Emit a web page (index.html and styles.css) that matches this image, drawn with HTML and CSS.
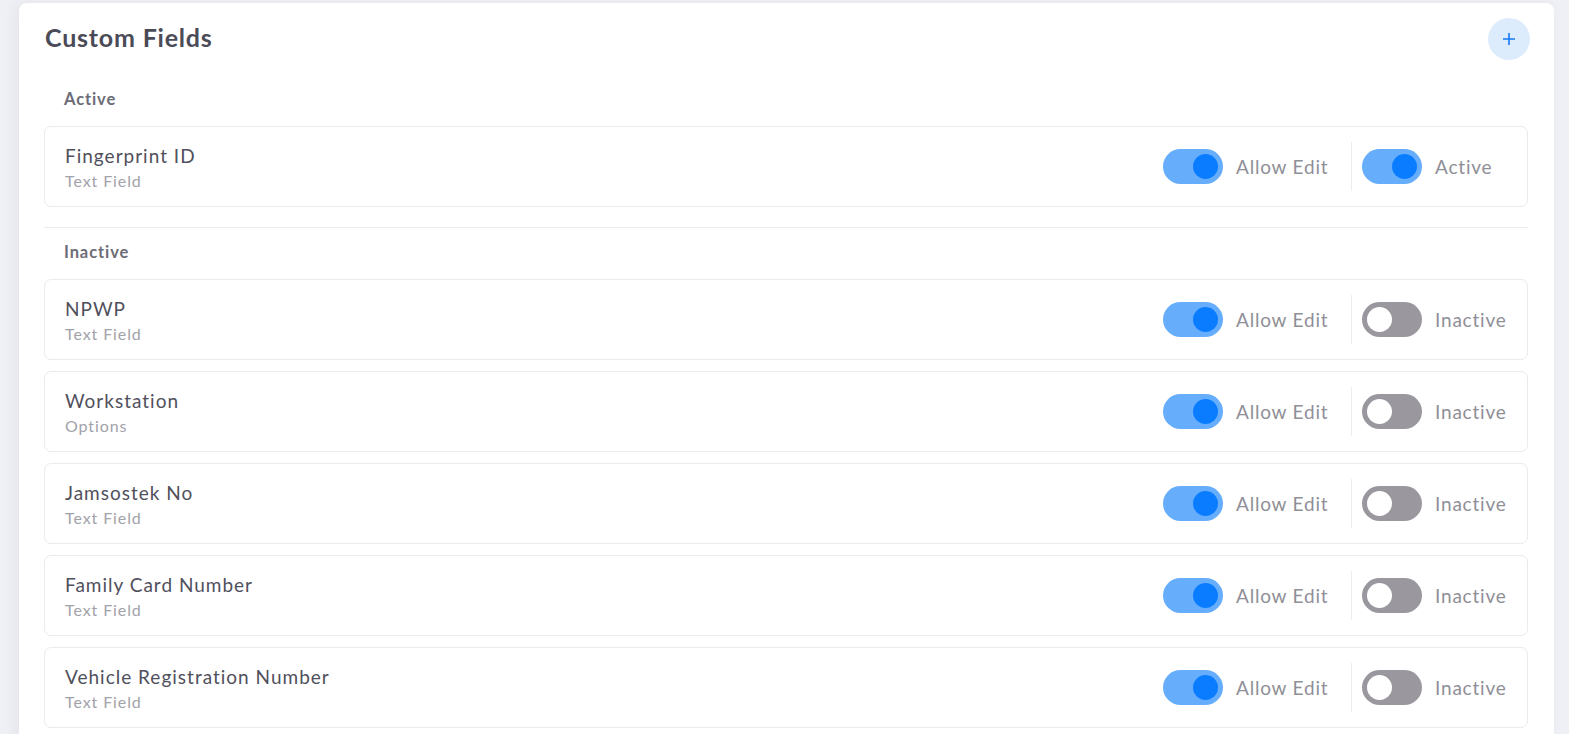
FILE: index.html
```html
<!DOCTYPE html>
<html lang="en">
<head>
    <meta charset="UTF-8">
    <meta name="viewport" content="width=device-width, initial-scale=1.0">
    <title>Custom Fields</title>
    <link rel="stylesheet" href="styles.css">
</head>
<body>
    <div class="card">
      <div class="card-head">
        <h1>Custom Fields</h1>
        <button class="add-btn" aria-label="Add field">
          <svg width="14" height="14" viewBox="0 0 14 14"><path d="M7 1v12M1 7h12" stroke="#1479f5" stroke-width="1.6" fill="none"/></svg>
        </button>
      </div>

      <div class="section-label">Active</div>
      <div class="field-list">
        <div class="field">
          <div class="field-info">
            <div class="field-name">Fingerprint ID</div>
            <div class="field-type">Text Field</div>
          </div>
          <div class="field-controls">
            <label class="switch-group edit-group"><span class="switch on"></span><span class="switch-text">Allow Edit</span></label>
            <span class="vline"></span>
            <label class="switch-group"><span class="switch on"></span><span class="switch-text">Active</span></label>
          </div>
        </div>
      </div>

      <hr class="divider">

      <div class="section-label">Inactive</div>
      <div class="field-list">
        <div class="field">
          <div class="field-info">
            <div class="field-name">NPWP</div>
            <div class="field-type">Text Field</div>
          </div>
          <div class="field-controls">
            <label class="switch-group edit-group"><span class="switch on"></span><span class="switch-text">Allow Edit</span></label>
            <span class="vline"></span>
            <label class="switch-group"><span class="switch"></span><span class="switch-text">Inactive</span></label>
          </div>
        </div>
        <div class="field">
          <div class="field-info">
            <div class="field-name">Workstation</div>
            <div class="field-type">Options</div>
          </div>
          <div class="field-controls">
            <label class="switch-group edit-group"><span class="switch on"></span><span class="switch-text">Allow Edit</span></label>
            <span class="vline"></span>
            <label class="switch-group"><span class="switch"></span><span class="switch-text">Inactive</span></label>
          </div>
        </div>
        <div class="field">
          <div class="field-info">
            <div class="field-name">Jamsostek No</div>
            <div class="field-type">Text Field</div>
          </div>
          <div class="field-controls">
            <label class="switch-group edit-group"><span class="switch on"></span><span class="switch-text">Allow Edit</span></label>
            <span class="vline"></span>
            <label class="switch-group"><span class="switch"></span><span class="switch-text">Inactive</span></label>
          </div>
        </div>
        <div class="field">
          <div class="field-info">
            <div class="field-name">Family Card Number</div>
            <div class="field-type">Text Field</div>
          </div>
          <div class="field-controls">
            <label class="switch-group edit-group"><span class="switch on"></span><span class="switch-text">Allow Edit</span></label>
            <span class="vline"></span>
            <label class="switch-group"><span class="switch"></span><span class="switch-text">Inactive</span></label>
          </div>
        </div>
        <div class="field">
          <div class="field-info">
            <div class="field-name">Vehicle Registration Number</div>
            <div class="field-type">Text Field</div>
          </div>
          <div class="field-controls">
            <label class="switch-group edit-group"><span class="switch on"></span><span class="switch-text">Allow Edit</span></label>
            <span class="vline"></span>
            <label class="switch-group"><span class="switch"></span><span class="switch-text">Inactive</span></label>
          </div>
        </div>
      </div>
    </div>
</body>
</html>
```

FILE: styles.css
```css
* {
  padding: 0;
  margin: 0;
  box-sizing: border-box;
}

body {
  background: #eef0f5;
  font-family: "Lato", "Noto Sans", sans-serif;
  padding: 3px 15px 0 19px;
  overflow: hidden;
}

/* main card */
.card {
  background: #fff;
  border-radius: 8px;
  padding: 15px 26px 20px 25px;
  box-shadow: -4px 0 14px rgba(40, 40, 70, 0.05);
}

.card-head {
  display: flex;
  align-items: center;
  justify-content: space-between;
  height: 42px;
}

.card-head h1 {
  font-size: 25px;
  font-weight: 700;
  color: #4b4b57;
  letter-spacing: 0.8px;
  margin-top: -4px;
  padding-left: 1px;
}

.add-btn {
  width: 42px;
  height: 42px;
  border-radius: 50%;
  border: none;
  background: #ddecfd;
  display: flex;
  align-items: center;
  justify-content: center;
  margin-right: -2px;
  cursor: pointer;
}

/* section labels */
.section-label {
  font-size: 16.5px;
  font-weight: 700;
  color: #6c6c76;
  line-height: 20px;
  letter-spacing: 0.9px;
  padding-left: 20px;
  margin: 29px 0 17px;
}

.divider {
  border: none;
  border-top: 1px solid #ebebee;
  margin: 20px 0 0;
}

.divider + .section-label {
  margin-top: 14px;
}

/* field rows */
.field-list {
  display: flex;
  flex-direction: column;
  gap: 11px;
}

.field {
  height: 81px;
  border: 1px solid #ebebee;
  border-radius: 7px;
  padding: 17px 20px;
  display: flex;
  align-items: center;
  justify-content: space-between;
}

.field-info {
  align-self: flex-start;
}

.field-name {
  font-size: 19px;
  line-height: 24px;
  color: #50505c;
  letter-spacing: 1px;
}

.field-type {
  font-size: 16px;
  line-height: 22px;
  margin-top: 2px;
  color: #a2a2aa;
  letter-spacing: 0.9px;
}

.field-controls {
  display: flex;
  align-items: center;
  width: 344px;
  flex-shrink: 0;
}

.switch-group {
  display: flex;
  align-items: center;
  gap: 13px;
  cursor: pointer;
  white-space: nowrap;
}

.edit-group {
  width: 163px;
  flex-shrink: 0;
}

.switch-text {
  font-size: 19px;
  color: #8f8f98;
  letter-spacing: 0.8px;
}

.vline {
  width: 1px;
  height: 49px;
  background: #ececef;
  margin: 0 10px 0 25px;
  flex-shrink: 0;
}

/* toggle */
.switch {
  position: relative;
  width: 60px;
  height: 35px;
  border-radius: 18px;
  background: #9a989e;
  flex-shrink: 0;
}

.switch::after {
  content: "";
  position: absolute;
  top: 5px;
  left: 5px;
  width: 25px;
  height: 25px;
  border-radius: 50%;
  background: #fff;
}

.switch.on {
  background: #66adfc;
}

.switch.on::after {
  left: 30px;
  background: #0a7cff;
}
```
